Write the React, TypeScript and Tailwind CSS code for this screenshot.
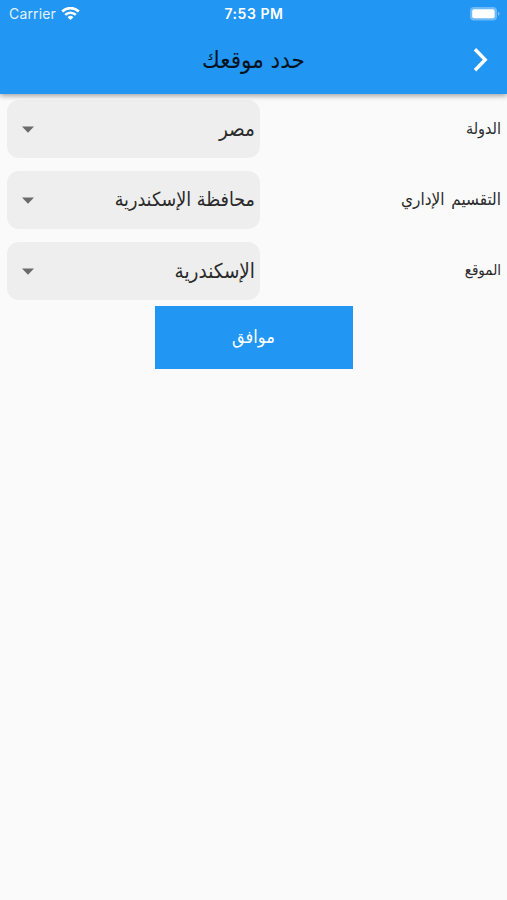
import clsx from 'clsx';
import type { ReactNode } from 'react';

interface FieldProps {
  label: string;
  value: string;
  labelClass?: string;
  valueClass?: string;
}

function Field({ label, value, labelClass = 'text-[16px]', valueClass = 'text-[19.5px]' }: FieldProps) {
  return (
    <div className="flex h-[71px] items-center justify-between pl-[7px] pr-[6px]">
      <span className={clsx('text-[#2a2a2a]', labelClass)}>{label}</span>
      <button
        type="button"
        className="flex h-[58px] w-[253px] items-center justify-between rounded-[12px] bg-[#eeeeee] pr-[5px] pl-[15px] pt-px text-[#2a2a2a]"
      >
        <span className={valueClass}>{value}</span>
        <svg className="h-[7px] w-[12px]" viewBox="0 0 12 7" fill="#6b6b6b">
          <path d="M0 .5h12L6 6.7z" />
        </svg>
      </button>
    </div>
  );
}

function StatusBar() {
  return (
    <div
      dir="ltr"
      className="grid h-[27px] grid-cols-3 items-center pl-[8px] pr-[7px] font-['Inter',sans-serif] text-[14px] text-white"
    >
      <div className="flex items-center gap-[5px] pl-px">
        <span className="tracking-[0.15px] text-[#e3f2fd]">Carrier</span>
        <svg className="h-[14px] w-[19px]" viewBox="0 0 19 14" fill="none" stroke="#fff" strokeWidth="2.6">
          <path d="M1.2 4.5a11.8 11.8 0 0 1 16.6 0M4.2 7.9a7.5 7.5 0 0 1 10.6 0" />
          <path d="M9.5 13.1 6.6 10.2a4.1 4.1 0 0 1 5.8 0z" fill="#fff" stroke="none" />
        </svg>
      </div>
      <span className="text-center font-semibold tracking-[0.55px]">7:53 PM</span>
      <svg className="h-[14px] w-[30px] justify-self-end" viewBox="0 0 30 14">
        <rect width="27" height="13.5" rx="4" fill="#fff" fillOpacity="0.35" />
        <rect x="2.2" y="2.2" width="22.4" height="9" rx="2" fill="#fff" />
        <path d="M28 4.7v4q1.5-.6 1.5-2t-1.5-2" fill="#fff" fillOpacity="0.45" />
      </svg>
    </div>
  );
}

function AppBar({ children }: { children: ReactNode }) {
  return (
    <header className="relative z-10 h-[94px] bg-[#2196f3] shadow-[0_2px_5px_rgba(0,0,0,0.35)]">
      <StatusBar />
      <div className="grid h-[66px] grid-cols-[54px_1fr_54px] items-center">
        <svg
          className="h-[24px] w-[16px] justify-self-center"
          viewBox="0 0 16 24"
          fill="none"
          stroke="#fff"
          strokeWidth="3.4"
        >
          <path d="M3 1.2 13.2 11.7 3 22.2" />
        </svg>
        <h1 className="pb-px text-center text-[24px] text-[#04121d]">{children}</h1>
      </div>
    </header>
  );
}

export default function App() {
  return (
    <div
      dir="rtl"
      className="h-screen overflow-hidden bg-[#fafafa] font-['DejaVu_Sans_Condensed','DejaVu_Sans',sans-serif]"
    >
      <AppBar>حدد موقعك</AppBar>
      <main className="-mt-px">
        <Field label="الدولة" value="مصر" valueClass="text-[20.5px]" />
        <Field label="التقسيم الإداري" value="محافظة الإسكندرية" labelClass="text-[17px] [word-spacing:2px]" />
        <Field label="الموقع" value="الإسكندرية" labelClass="text-[15px]" valueClass="text-[20.5px]" />
        <button
          type="button"
          className="mx-auto block h-[62.5px] w-[198px] bg-[#2196f3] pb-[2px] text-[18px] text-white"
        >
          موافق
        </button>
      </main>
    </div>
  );
}
